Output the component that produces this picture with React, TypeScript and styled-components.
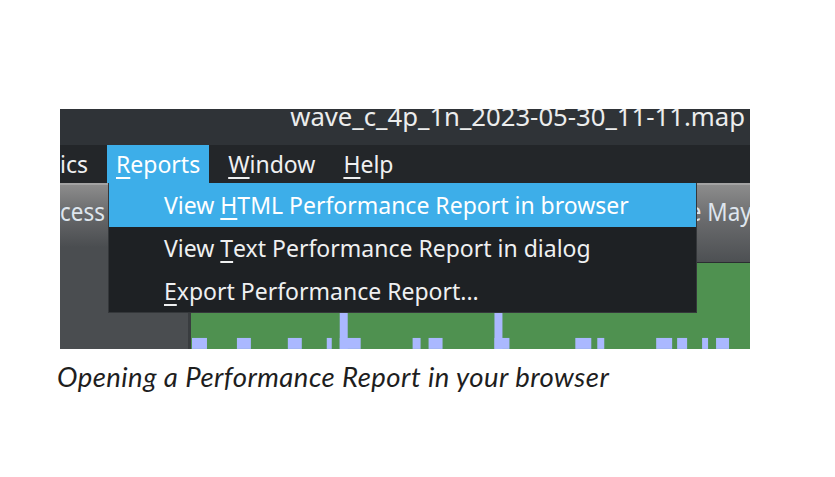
import React from "react";
import styled, { createGlobalStyle } from "styled-components";

const Global = createGlobalStyle`
  html, body { margin: 0; padding: 0; background: #ffffff; }
  body { font-family: "Noto Sans", sans-serif; }
`;

const Page = styled.div`
  padding: 109px 0 0 60px;
  width: 835px;
  height: 477px;
  box-sizing: border-box;
`;

const Shot = styled.div`
  position: relative;
  width: 690px;
  height: 240px;
  overflow: hidden;
  display: flex;
  flex-direction: column;
  background: #232629;
  font-family: "Noto Sans", sans-serif;
  font-size: 23px;
  line-height: 31px;
  color: #eff0f1;
`;

const TitleBar = styled.div`
  height: 36px;
  flex: none;
  box-sizing: border-box;
  display: flex;
  justify-content: flex-end;
  align-items: flex-end;
  padding: 0 5px 11px 0;
  background: #2f3337;
  color: #eceded;
  font-size: 25.7px;
  line-height: 35px;
  white-space: nowrap;
`;

const MenuBar = styled.div`
  height: 38px;
  flex: none;
  display: flex;
  align-items: stretch;
  gap: 10px;
  background: #232629;
  white-space: nowrap;
`;

const MenuItem = styled.div<{ $active?: boolean; $clipped?: boolean }>`
  display: flex;
  align-items: center;
  padding: ${(p) => (p.$clipped ? "0 9px 0 0" : "0 9px")};
  background: ${(p) => (p.$active ? "#3daee9" : "transparent")};
  color: ${(p) => (p.$active ? "#ffffff" : "#eff0f1")};
`;

const Mn = styled.span`
  text-decoration: underline;
  text-decoration-thickness: 2px;
  text-underline-offset: 4px;
`;

const Body = styled.div`
  flex: 1;
  display: flex;
  min-height: 0;
`;

const LeftPanel = styled.div`
  width: 128px;
  flex: none;
  display: flex;
  flex-direction: column;
  background: #4a4d50;
  border-right: 3px solid #393c3f;
`;

const ToolButton = styled.div<{ $align: "start" | "end" }>`
  height: 80px;
  flex: none;
  box-sizing: border-box;
  display: flex;
  align-items: flex-start;
  padding-top: 9px;
  justify-content: ${(p) => (p.$align === "end" ? "flex-end" : "flex-start")};
  overflow: hidden;
  white-space: nowrap;
  border-top: 2px solid #a3a3a3;
  background: linear-gradient(#8c8c8c 0%, #6a6b6d 45%, #4d5053 100%);
  color: #dfe6ee;
  font-size: 25.5px;
  line-height: 35px;
`;

const ButtonLabel = styled.span<{ $origin: "left" | "right" }>`
  display: inline-block;
  transform: scaleX(0.88);
  transform-origin: ${(p) => p.$origin} center;
`;

const LeftButton = styled(ToolButton)`
  padding-right: 83px;
  background: linear-gradient(#8c8c8c 0%, #666769 40%, #4a4d50 80%);
`;

const Main = styled.div`
  flex: 1;
  display: flex;
  flex-direction: column;
  min-width: 0;
`;

const ToolRow = styled.div`
  height: 80px;
  flex: none;
  display: flex;
  justify-content: flex-end;
  background: #2a2e32;
`;

const RightButton = styled(ToolButton)`
  width: 77px;
  padding-left: 2px;
  border-bottom: 1px solid #2b2e31;
`;

const Chart = styled.div`
  flex: 1;
  background: #4f9150;
  display: flex;
  align-items: flex-end;
`;

const DropMenu = styled.div`
  position: absolute;
  left: 48px;
  top: 74px;
  width: 589px;
  height: 130px;
  box-sizing: border-box;
  display: flex;
  flex-direction: column;
  background: #1e2124;
  border: 1px solid #34373a;
  border-top: none;
  white-space: nowrap;
`;

const DropItem = styled.div<{ $active?: boolean }>`
  height: ${(p) => (p.$active ? "44px" : "43px")};
  flex: none;
  display: flex;
  align-items: center;
  padding-left: 55px;
  background: ${(p) => (p.$active ? "#3daee9" : "transparent")};
  color: ${(p) => (p.$active ? "#ffffff" : "#eff0f1")};
`;

const Caption = styled.div`
  margin: 12px 0 0 -3px;
  font-family: Lato, "Noto Sans", sans-serif;
  font-style: italic;
  font-size: 27.5px;
  letter-spacing: 0.45px;
  line-height: 32px;
  color: #1e1e1e;
  white-space: nowrap;
`;

const bars: [number, number, number, number][] = [
  [1, 75, 15, 11],
  [46, 75, 14, 11],
  [97, 75, 14, 11],
  [136, 75, 5, 11],
  [149, 20, 8, 66],
  [149, 75, 21, 11],
  [222, 75, 8, 11],
  [238, 75, 14, 11],
  [304, 20, 8, 66],
  [304, 75, 15, 11],
  [385, 75, 16, 11],
  [407, 75, 7, 11],
  [466, 75, 16, 11],
  [487, 75, 10, 11],
  [512, 75, 6, 11],
  [526, 75, 13, 11],
];

export default function App() {
  return (
    <>
      <Global />
      <Page>
        <Shot>
          <TitleBar>wave_c_4p_1n_2023-05-30_11-11.map</TitleBar>
          <MenuBar>
            <MenuItem $clipped>ics</MenuItem>
            <MenuItem $active>
              <Mn>R</Mn>eports
            </MenuItem>
            <MenuItem>
              <Mn>W</Mn>indow
            </MenuItem>
            <MenuItem>
              <Mn>H</Mn>elp
            </MenuItem>
          </MenuBar>
          <Body>
            <LeftPanel>
              <LeftButton $align="end">
                <ButtonLabel $origin="right">Process</ButtonLabel>
              </LeftButton>
            </LeftPanel>
            <Main>
              <ToolRow>
                <RightButton $align="start">
                  <ButtonLabel $origin="left">ge May</ButtonLabel>
                </RightButton>
              </ToolRow>
              <Chart>
                <svg width="560" height="86" viewBox="0 0 560 86">
                  {bars.map(([x, y, w, h], i) => (
                    <rect key={i} x={x} y={y} width={w} height={h} fill="#aab8ff" />
                  ))}
                </svg>
              </Chart>
            </Main>
          </Body>
          <DropMenu>
            <DropItem $active>
              View&nbsp;<Mn>H</Mn>TML Performance Report in browser
            </DropItem>
            <DropItem>
              View&nbsp;<Mn>T</Mn>ext Performance Report in dialog
            </DropItem>
            <DropItem>
              <Mn>E</Mn>xport Performance Report...
            </DropItem>
          </DropMenu>
        </Shot>
        <Caption>Opening a Performance Report in your browser</Caption>
      </Page>
    </>
  );
}
